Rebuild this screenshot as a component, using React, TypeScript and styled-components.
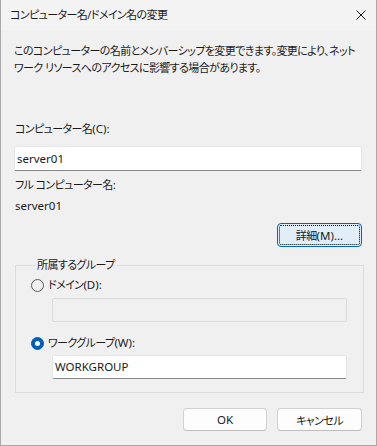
import styled, { createGlobalStyle } from 'styled-components';

const GlobalStyle = createGlobalStyle`
  html, body {
    margin: 0;
    padding: 0;
    background: #f0f0f0;
  }

  body {
    font-family: 'Noto Sans', 'Noto Sans CJK JP', sans-serif;
    font-size: 11px;
    letter-spacing: -0.6px;
    color: #1a1a1a;
    font-feature-settings: 'palt';
  }
`;

const Latin = styled.span`
  font-size: 11.5px;
  letter-spacing: 0;
`;

const Window = styled.div`
  box-sizing: border-box;
  width: 377px;
  height: 446px;
  display: flex;
  flex-direction: column;
  background: #f0f0f0;
  border: 1px solid #a8a8a8;
  border-top: none;
`;

const TitleBar = styled.div`
  height: 30px;
  flex-shrink: 0;
  display: flex;
  align-items: center;
  justify-content: space-between;
  padding: 0 10px 0 9px;
  background: #f3f3f3;
  line-height: 16px;
`;

const CloseButton = styled.button`
  width: 10px;
  height: 10px;
  padding: 0;
  border: none;
  background: none;
  display: flex;
`;

const Body = styled.div`
  display: flex;
  flex-direction: column;
  padding: 0 14px 0 13px;
`;

const Description = styled.p`
  margin: 12px 0 0;
  line-height: 17px;
  white-space: nowrap;
`;

const Label = styled.div<{ $top: number }>`
  margin-top: ${(p) => p.$top}px;
  line-height: 16px;
  padding-left: 1px;
`;

const TextBox = styled.div<{ $disabled?: boolean; $top: number; $height: number }>`
  box-sizing: border-box;
  height: ${(p) => p.$height}px;
  margin-top: ${(p) => p.$top}px;
  display: flex;
  align-items: center;
  padding: 0 2px;
  border: 1px solid ${(p) => (p.$disabled ? '#dcdcdc' : '#e6e6e6')};
  border-bottom-color: ${(p) => (p.$disabled ? '#dcdcdc' : '#868686')};
  border-radius: 2px;
  background: ${(p) => (p.$disabled ? '#f0f0f0' : '#ffffff')};
  line-height: 16px;
`;

const ButtonRow = styled.div<{ $top: number }>`
  display: flex;
  justify-content: flex-end;
  gap: 10px;
  margin-top: ${(p) => p.$top}px;
`;

const Button = styled.button<{ $width: number; $focused?: boolean }>`
  box-sizing: border-box;
  width: ${(p) => p.$width}px;
  height: ${(p) => (p.$focused ? 24 : 23)}px;
  padding: 0;
  font-family: inherit;
  font-size: 11px;
  letter-spacing: -0.6px;
  font-feature-settings: 'palt';
  color: #1a1a1a;
  border-radius: 4px;
  border: 1px solid ${(p) => (p.$focused ? '#0067c0' : '#d0d0d0')};
  border-bottom-color: ${(p) => (p.$focused ? '#0067c0' : '#bdbdbd')};
  background: ${(p) => (p.$focused ? '#e0eef9' : '#fdfdfd')};
  display: flex;
  align-items: center;
  justify-content: center;
  ${(p) => (p.$focused ? 'outline: 1px dotted #000; outline-offset: -3px;' : '')}
`;

const Group = styled.fieldset`
  box-sizing: border-box;
  width: 349px;
  margin: 10px 0 0 1px;
  padding: 0 16px 13px 15px;
  border: 1px solid #dcdcdc;
  min-width: 0;
`;

const Legend = styled.legend`
  margin-left: 5px;
  padding: 0 2px 0 1px;
  line-height: 16px;
`;

const RadioRow = styled.label<{ $top: number }>`
  display: flex;
  align-items: center;
  gap: 4px;
  margin-top: ${(p) => p.$top}px;
  line-height: 16px;
`;

const RadioMark = styled.span<{ $checked?: boolean }>`
  box-sizing: border-box;
  width: 13px;
  height: 13px;
  border-radius: 50%;
  border: 1px solid ${(p) => (p.$checked ? '#005fb8' : '#5c5c5c')};
  background: ${(p) => (p.$checked ? '#005fb8' : 'transparent')};
  display: flex;
  align-items: center;
  justify-content: center;

  &::after {
    content: '';
    display: ${(p) => (p.$checked ? 'block' : 'none')};
    width: 5px;
    height: 5px;
    border-radius: 50%;
    background: #ffffff;
  }
`;

const Indented = styled.div`
  margin-left: 21px;
`;

const App = () => {
  return (
    <>
      <GlobalStyle />
      <Window>
        <TitleBar>
          <span>コンピューター名/ドメイン名の変更</span>
          <CloseButton aria-label="閉じる">
            <svg width="10" height="10" viewBox="0 0 10 10">
              <path d="M0.5 0.5 L9.5 9.5 M9.5 0.5 L0.5 9.5" stroke="#1a1a1a" strokeWidth="1" />
            </svg>
          </CloseButton>
        </TitleBar>
        <Body>
          <Description>
            このコンピューターの名前とメンバーシップを変更できます。変更により、ネット
            <br />
            ワーク リソースへのアクセスに影響する場合があります。
          </Description>

          <Label $top={45}>
            コンピューター名<Latin>(C):</Latin>
          </Label>
          <TextBox $top={9} $height={25}>
            <Latin>server01</Latin>
          </TextBox>

          <Label $top={6}>
            フル コンピューター名<Latin>:</Latin>
          </Label>
          <Label $top={5}>
            <Latin>server01</Latin>
          </Label>

          <ButtonRow $top={9}>
            <Button $width={85} $focused>
              詳細<Latin>(M)...</Latin>
            </Button>
          </ButtonRow>

          <Group>
            <Legend>所属するグループ</Legend>
            <RadioRow $top={4}>
              <RadioMark />
              <span>
                ドメイン<Latin>(D):</Latin>
              </span>
            </RadioRow>
            <Indented>
              <TextBox $top={5} $height={24} $disabled />
            </Indented>
            <RadioRow $top={13}>
              <RadioMark $checked />
              <span>
                ワークグループ<Latin>(W):</Latin>
              </span>
            </RadioRow>
            <Indented>
              <TextBox $top={4} $height={24}>
                <Latin>WORKGROUP</Latin>
              </TextBox>
            </Indented>
          </Group>

          <ButtonRow $top={15}>
            <Button $width={84}>
              <Latin>OK</Latin>
            </Button>
            <Button $width={85}>キャンセル</Button>
          </ButtonRow>
        </Body>
      </Window>
    </>
  );
};

export default App;
